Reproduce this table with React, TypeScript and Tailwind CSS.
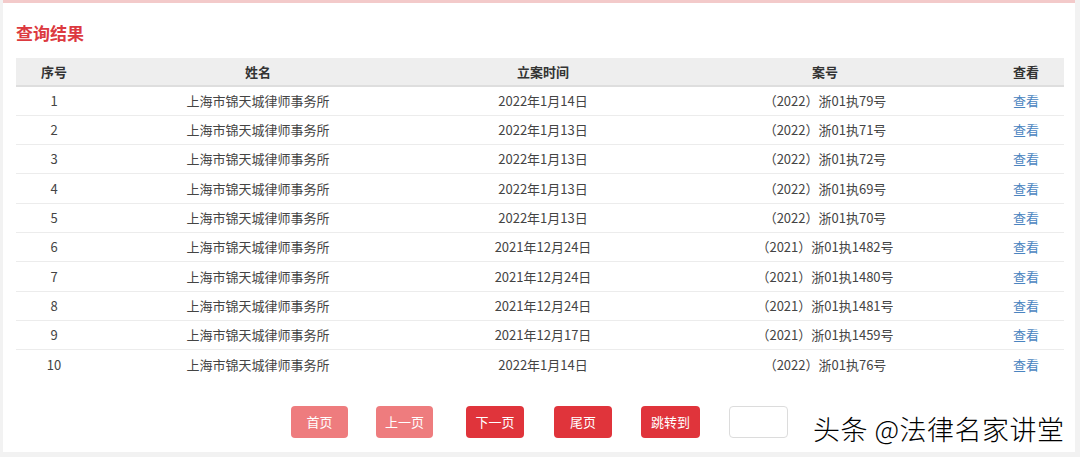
const rows = [
  ["1", "上海市锦天城律师事务所", "2022年1月14日", "（2022）浙01执79号"],
  ["2", "上海市锦天城律师事务所", "2022年1月13日", "（2022）浙01执71号"],
  ["3", "上海市锦天城律师事务所", "2022年1月13日", "（2022）浙01执72号"],
  ["4", "上海市锦天城律师事务所", "2022年1月13日", "（2022）浙01执69号"],
  ["5", "上海市锦天城律师事务所", "2022年1月13日", "（2022）浙01执70号"],
  ["6", "上海市锦天城律师事务所", "2021年12月24日", "（2021）浙01执1482号"],
  ["7", "上海市锦天城律师事务所", "2021年12月24日", "（2021）浙01执1480号"],
  ["8", "上海市锦天城律师事务所", "2021年12月24日", "（2021）浙01执1481号"],
  ["9", "上海市锦天城律师事务所", "2021年12月17日", "（2021）浙01执1459号"],
  ["10", "上海市锦天城律师事务所", "2022年1月14日", "（2022）浙01执76号"],
];

const font = "font-['Noto_Sans_CJK_SC','Noto_Sans',sans-serif]";

export default function App() {
  return (
    <div className={`relative h-[457px] w-[1080px] overflow-hidden bg-[#f2f2f2] ${font}`}>
      <div className="ml-[3px] mr-[5px] h-[452px] border-t-[3px] border-[#f3caca] bg-white">
        <div className="px-[13px] pt-[18px]">
          <h2 className="text-[17px] font-bold leading-[24px] text-[#dc3a40]">查询结果</h2>
          <table className="mt-[13px] w-[1048px] table-fixed border-collapse text-[13px] text-[#444]">
            <colgroup>
              <col className="w-[76px]" />
              <col className="w-[332px]" />
              <col className="w-[238px]" />
              <col className="w-[326px]" />
              <col className="w-[76px]" />
            </colgroup>
            <thead>
              <tr className="h-[28px] border-b-2 border-[#dedede] bg-[#eeeeee] font-bold text-[#333]">
                <th>序号</th>
                <th>姓名</th>
                <th>立案时间</th>
                <th>案号</th>
                <th>查看</th>
              </tr>
            </thead>
            <tbody>
              {rows.map((r) => (
                <tr key={r[0]} className="h-[29.3px] border-b border-[#ececec] text-center last:border-b-0">
                  <td>{r[0]}</td>
                  <td>{r[1]}</td>
                  <td>{r[2]}</td>
                  <td>{r[3]}</td>
                  <td className="text-[#4a84c0]">查看</td>
                </tr>
              ))}
            </tbody>
          </table>
          <div className="mt-[27px] flex items-center pl-[275px] text-[13px] text-white">
            <button className="h-[32px] w-[57px] rounded bg-[#ee7c7e]">首页</button>
            <button className="ml-[28px] h-[32px] w-[57px] rounded bg-[#ee7c7e]">上一页</button>
            <button className="ml-[33px] h-[32px] w-[58px] rounded bg-[#e0343b]">下一页</button>
            <button className="ml-[30px] h-[32px] w-[58px] rounded bg-[#e0343b]">尾页</button>
            <button className="ml-[29px] h-[32px] w-[59px] rounded bg-[#e0343b]">跳转到</button>
            <input className="ml-[29px] h-[32px] w-[59px] rounded border border-[#dcdcdc] bg-white" />
          </div>
        </div>
      </div>
      <div className="absolute left-[813px] top-[411px] text-[27px] font-light leading-[36px] tracking-[0.5px] text-black [text-shadow:0_0_2px_#fff,1px_1px_0_#fff]">
        头条 @法律名家讲堂
      </div>
    </div>
  );
}
